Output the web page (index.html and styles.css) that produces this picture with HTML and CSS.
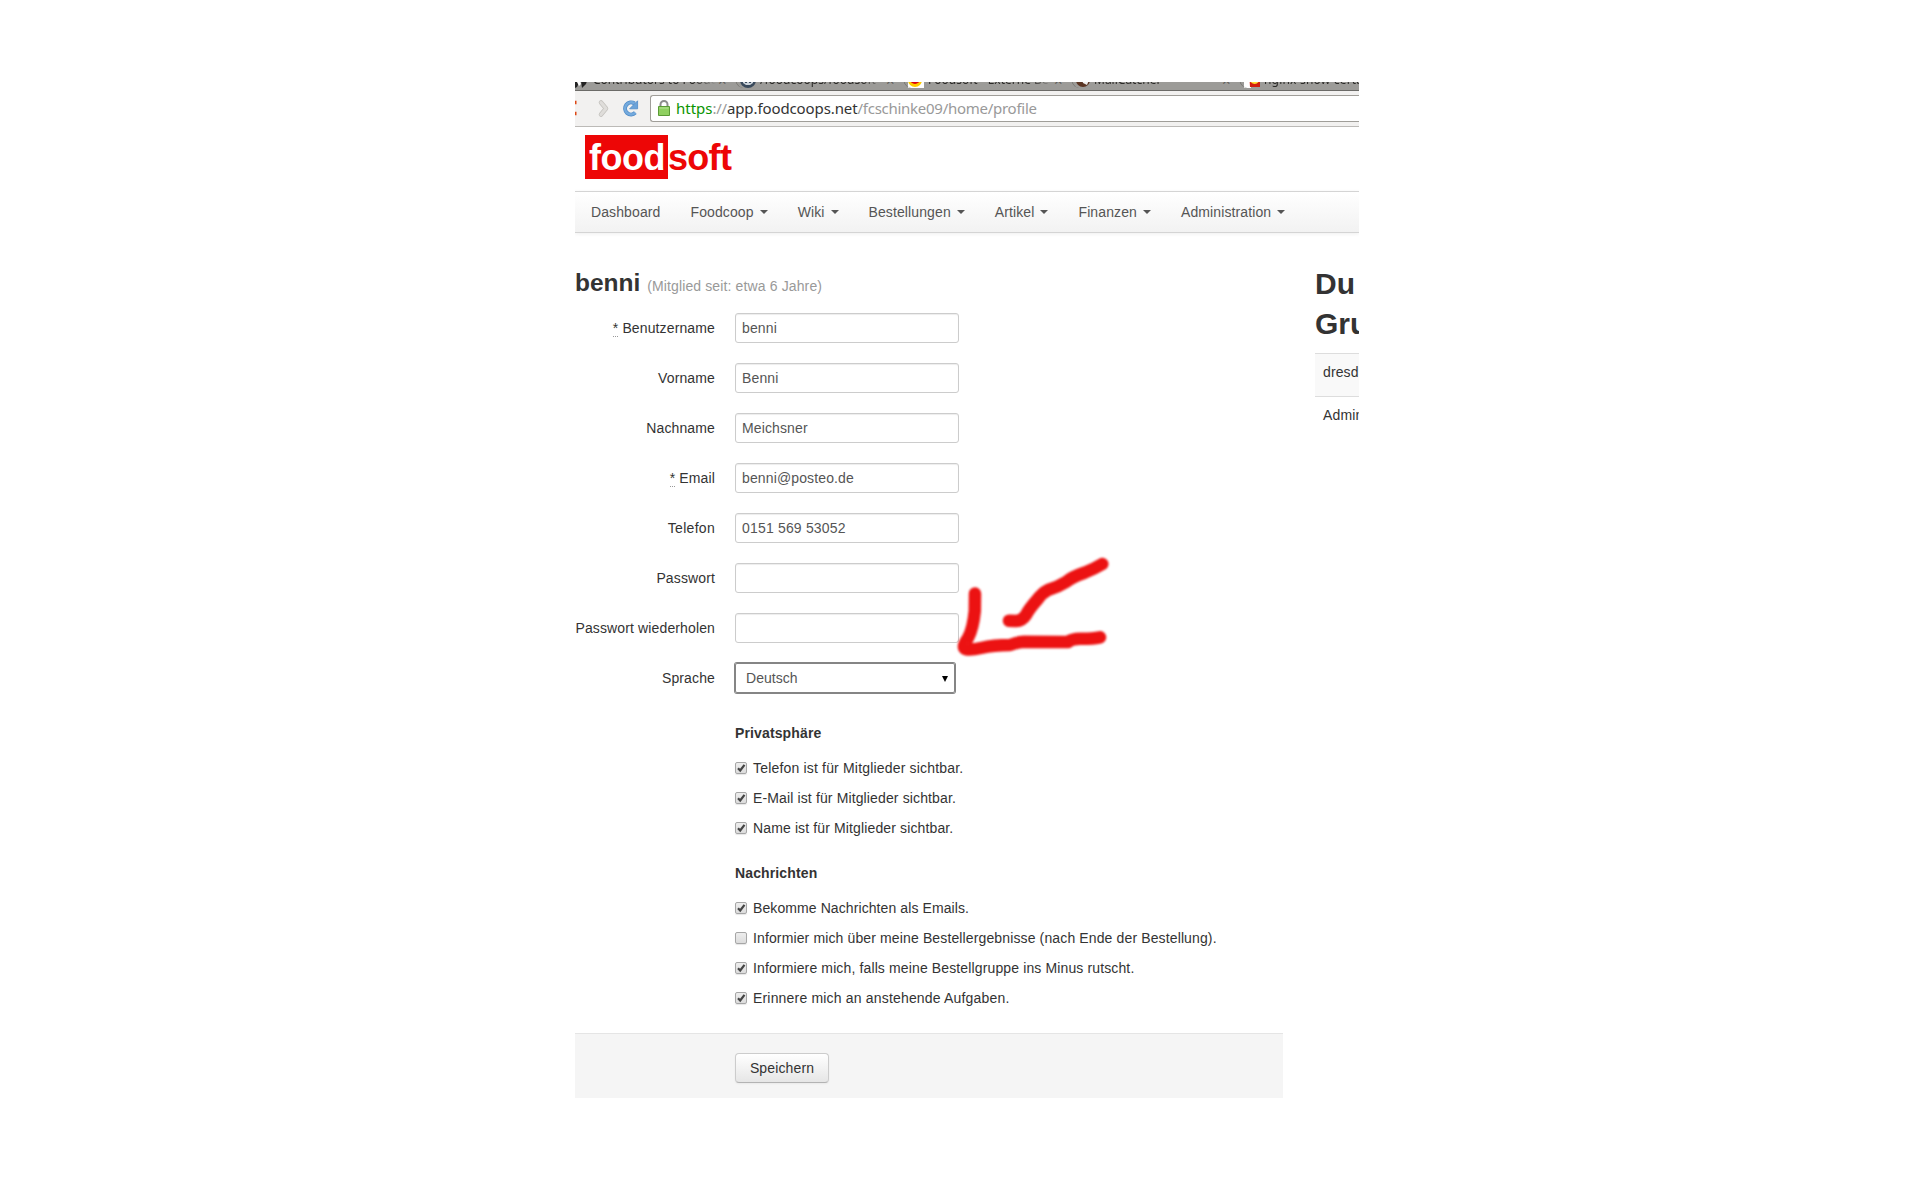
FILE: index.html
```html
<!DOCTYPE html>
<html lang="de">
<head>
<meta charset="utf-8">
<title>Foodsoft</title>
<link rel="stylesheet" href="styles.css">
</head>
<body>
<div class="window">
  <div class="tabs">
    <div class="tab tab-a"><svg class="fav" viewBox="0 0 16 16"><path d="M0 9l3 0 1 2-2 4-2 1z" fill="#222"/><path d="M6 9h6l-1 3-4 4z" fill="#222"/><path d="M2 10l3-1 1 3-2 2z" fill="#fff"/></svg><span class="title">Contributors to Foodc</span><span class="close">×</span></div>
    <div class="tab tab-b"><svg class="fav" viewBox="0 0 16 16"><circle cx="8" cy="8" r="8" fill="#3a4a5c"/><path d="M3 5l3 1h4l3-1v6l-3 2H6l-3-2z" fill="#ccd3da"/><path d="M5 9h2v2H5zM9 9h2v2H9z" fill="#3a4a5c"/></svg><span class="title">/foodcoops/foodsoft</span><span class="close">×</span></div>
    <div class="tab tab-c"><svg class="fav" viewBox="0 0 16 16"><path d="M0 0h16v16H0z" fill="#fff"/><circle cx="7" cy="8" r="7" fill="#fc0"/><circle cx="7" cy="7" r="5" fill="#d01"/></svg><span class="title">Foodsoft - Externe Be</span><span class="close">×</span></div>
    <div class="tab tab-d"><svg class="fav" viewBox="0 0 16 16"><circle cx="7" cy="8" r="7" fill="#5b3523"/><path d="M6 7l7 1-2 5-4-2z" fill="#eee"/></svg><span class="title">MailCatcher</span><span class="close">×</span></div>
    <div class="tab tab-e"><svg class="fav" viewBox="0 0 16 16"><path d="M0 0h7v16H0z" fill="#fff"/><path d="M5 0h11v15H6z" fill="#d21d0c"/><path d="M7 9q4 4 7 0" stroke="#fd3" stroke-width="2" fill="none"/></svg><span class="title">nginx show certai</span></div>
  </div>
  <div class="toolbar">
    <svg class="buttons" width="75" height="35" viewBox="0 0 75 35">
      <path d="M0 11.500h1.500M0 22.500h1.500" stroke="#dd4814" stroke-width="3.500"/>
      <path d="M26 11.500l5 6-5 6" fill="none" stroke="#c4c2be" stroke-width="4.500" stroke-linecap="round" stroke-linejoin="round"/>
      <path d="M26 11.500l5 6-5 6" fill="none" stroke="#dfddda" stroke-width="3" stroke-linecap="round" stroke-linejoin="round"/>
      <path d="M59.500 12.500a6 6 0 1 0 .8 9.200" fill="none" stroke="#4f8ac6" stroke-width="4"/>
      <path d="M59.500 12.500a6 6 0 1 0 .8 9.200" fill="none" stroke="#74aadd" stroke-width="2.600"/>
      <path d="M62.600 9.800v8h-8z" fill="#6ba3d9" stroke="#4f8ac6" stroke-width=".8"/>
    </svg>
    <div class="address">
      <svg class="lock" width="12" height="16" viewBox="0 0 12 16">
        <path d="M2.500 7V4.500a3.500 3.500 0 0 1 7 0V7" fill="none" stroke="#8d8d8d" stroke-width="2"/>
        <path d="M.5 6.500h11v9H.5z" fill="#8fd060" stroke="#5a9a35"/>
        <path d="M1.500 8h9" stroke="#b5e494"/>
      </svg>
      <span class="url"><span class="scheme">https</span>://<span class="host">app.foodcoops.net</span>/fcschinke09/home/profile</span>
    </div>
  </div>
  <header class="header"><div class="logo"><span class="logo-box">food</span><span class="logo-rest">soft</span></div></header>
  <nav class="nav">
    <a>Dashboard</a>
    <a>Foodcoop <b class="caret"></b></a>
    <a>Wiki <b class="caret"></b></a>
    <a>Bestellungen <b class="caret"></b></a>
    <a>Artikel <b class="caret"></b></a>
    <a>Finanzen <b class="caret"></b></a>
    <a>Administration <b class="caret"></b></a>
  </nav>
  <div class="content">
    <main class="profile">
      <h3>benni <small>(Mitglied seit: etwa 6 Jahre)</small></h3>
      <form>
        <div class="row"><label><abbr>*</abbr> Benutzername</label><div class="field">benni</div></div>
        <div class="row"><label>Vorname</label><div class="field">Benni</div></div>
        <div class="row"><label>Nachname</label><div class="field">Meichsner</div></div>
        <div class="row"><label><abbr>*</abbr> Email</label><div class="field">benni@posteo.de</div></div>
        <div class="row"><label class="wide">Telefon</label><div class="field loose">0151 569 53052</div></div>
        <div class="row"><label>Passwort</label><div class="field"></div></div>
        <div class="row"><label>Passwort wiederholen</label><div class="field"></div></div>
        <div class="row"><label>Sprache</label><div class="field select"><span>Deutsch</span><i class="arrow"></i></div></div>
        <section class="settings">
          <h5>Privatsphäre</h5>
          <div class="check loose"><i class="box"><svg viewBox="0 0 12 12"><path d="M3 6.200l2.200 2.300L9.500 2.800"/></svg></i>Telefon ist für Mitglieder sichtbar.</div>
          <div class="check"><i class="box"><svg viewBox="0 0 12 12"><path d="M3 6.200l2.200 2.300L9.500 2.800"/></svg></i>E-Mail ist für Mitglieder sichtbar.</div>
          <div class="check"><i class="box"><svg viewBox="0 0 12 12"><path d="M3 6.200l2.200 2.300L9.500 2.800"/></svg></i>Name ist für Mitglieder sichtbar.</div>
        </section>
        <section class="settings">
          <h5>Nachrichten</h5>
          <div class="check tight"><i class="box"><svg viewBox="0 0 12 12"><path d="M3 6.200l2.200 2.300L9.500 2.800"/></svg></i>Bekomme Nachrichten als Emails.</div>
          <div class="check"><i class="box"></i>Informier mich über meine Bestellergebnisse (nach Ende der Bestellung).</div>
          <div class="check"><i class="box"><svg viewBox="0 0 12 12"><path d="M3 6.200l2.200 2.300L9.500 2.800"/></svg></i>Informiere mich, falls meine Bestellgruppe ins Minus rutscht.</div>
          <div class="check loose"><i class="box"><svg viewBox="0 0 12 12"><path d="M3 6.200l2.200 2.300L9.500 2.800"/></svg></i>Erinnere mich an anstehende Aufgaben.</div>
        </section>
        <div class="actions"><button type="button">Speichern</button></div>
      </form>
    </main>
    <aside class="groups">
      <h2>Du<br>Gru</h2>
      <div class="group odd">dresd</div>
      <div class="group">Admin</div>
    </aside>
  </div>
  <svg class="marker" width="160" height="110" viewBox="950 550 160 110">
    <path d="M975 593.500L974.800 611Q973 629 968 638Q961 648 966 649.200Q972 650 981 648Q994 645 1010 645Q1018 642 1024 641.800L1068 642Q1072 638.800 1080 638.800Q1092 639 1100 637.300"/>
    <path d="M1102.300 564Q1094 569 1085 572.500Q1072 577 1066 582Q1058 587 1048 590Q1042 593 1037 600Q1029 609 1026 615Q1022 621 1016 621L1009 620.700"/>
  </svg>
</div>
</body>
</html>
```
FILE: styles.css
```css
* { box-sizing: border-box; }
body {
  margin: 0;
  background: #fff;
  color: #333;
  font: 14px/20px "Liberation Sans", Arial, sans-serif;
  letter-spacing: .13px;
}
.window {
  position: relative;
  width: 784px;
  height: 1016px;
  margin: 82px 0 0 575px;
  overflow: hidden;
}

/* browser chrome */
.tabs {
  display: flex;
  height: 9px;
  overflow: hidden;
  background: #9c9b98;
  border-bottom: 1px solid #6c6b68;
  color: #2b2a28;
  font: 12px/16px "Noto Sans", sans-serif;
  letter-spacing: 0;
}
.tab {
  position: relative;
  display: flex;
  align-items: center;
  flex: none;
  width: 168px;
  height: 16px;
  margin-top: -10px;
  white-space: nowrap;
}
.tab + .tab::before {
  content: "";
  position: absolute;
  left: -4px;
  bottom: 0;
  width: 8px;
  height: 9px;
  border-left: 1px solid #75746f;
  border-bottom-left-radius: 6px;
  transform: skewX(18deg);
}
.tab .fav { width: 16px; height: 16px; margin-right: 4px; flex: none; }
.tab .title {
  flex: 1;
  overflow: hidden;
  -webkit-mask-image: linear-gradient(90deg, #000 82%, transparent);
  mask-image: linear-gradient(90deg, #000 82%, transparent);
}
.tab .close { width: 24px; padding-left: 2px; color: #5b5a57; font-size: 15px; }
.tab-a { width: 165px; }
.tab-a .fav { margin-right: 2px; }
.tab-d .fav { margin-right: 2px; }
.tab-e .title { letter-spacing: .2px; }

.toolbar {
  display: flex;
  height: 36px;
  background: #f2f1f0;
  border-bottom: 1px solid #bcbab7;
}
.buttons { flex: none; }
.address {
  display: flex;
  flex: 1;
  align-items: center;
  height: 27px;
  margin-top: 4px;
  padding: 0 0 1px 7px;
  background: #fff;
  border: 1px solid #a09e99;
  border-right: 0;
  border-radius: 3px 0 0 3px;
}
.lock { margin-right: 6px; }
.url {
  color: #999;
  font: 15px/20px "Noto Sans", sans-serif;
  letter-spacing: -.27px;
  white-space: nowrap;
}
.scheme { color: #0a9400; letter-spacing: 0; }
.host { color: #333; letter-spacing: -.1px; }

/* page header */
.header { height: 64px; padding: 8px 0 0 10px; }
.logo {
  display: flex;
  color: #ed0606;
  font-size: 36px;
  font-weight: bold;
  letter-spacing: -.5px;
  line-height: 44px;
}
.logo-box { width: 83px; height: 44px; padding: 1px 0 0 4px; background: #ed0606; color: #fff; }
.logo-rest { padding-top: 1px; letter-spacing: -.7px; }
.nav {
  display: flex;
  height: 42px;
  padding-left: 1px;
  border: solid #d4d4d4;
  border-width: 1px 0;
  background: linear-gradient(#fff, #f2f2f2);
  box-shadow: 0 1px 4px rgba(0, 0, 0, .065);
  letter-spacing: .11px;
}
.nav a { padding: 10px 15px; color: #555; }
.caret {
  display: inline-block;
  margin: 8px 0 0 2px;
  vertical-align: top;
  border: 4px solid transparent;
  border-top-color: #555;
  border-bottom: 0;
}

/* profile */
.content { display: flex; gap: 32px; padding-top: 30px; }
.profile { flex: none; width: 708px; }
h3 { margin: 0; padding-bottom: 7px; font-size: 24.5px; line-height: 40px; letter-spacing: 0; }
h3 small { color: #999; font-size: 14px; font-weight: normal; letter-spacing: .13px; }
.row { display: flex; gap: 20px; height: 30px; margin-bottom: 20px; }
.row label { width: 140px; padding-top: 5px; text-align: right; white-space: nowrap; }
.row .wide { letter-spacing: .3px; }
abbr { border-bottom: 1px dotted #999; }
.field {
  width: 224px;
  height: 30px;
  padding: 4px 6px;
  border: 1px solid #ccc;
  border-radius: 3px;
  color: #555;
  box-shadow: inset 0 1px 1px rgba(0, 0, 0, .075);
}
.loose { letter-spacing: .18px; }
.tight { letter-spacing: .09px; }
.select {
  display: flex;
  justify-content: space-between;
  width: 220px;
  padding: 4px 6px 4px 10px;
  border-color: #858585;
  border-radius: 2px;
  box-shadow: 0 0 0 1px #858585;
  letter-spacing: .05px;
}
.arrow {
  margin-top: 8px;
  height: 6px;
  border: 3.5px solid transparent;
  border-top: 6px solid #000;
  border-bottom: 0;
}
.settings { padding: 0 0 5px 160px; }
h5 { margin: 0; padding: 10px 0; height: 40px; font-size: 14px; line-height: 20px; }
.check { display: flex; height: 20px; margin: 5px 0 10px; white-space: nowrap; }
.box {
  width: 12px;
  height: 12px;
  margin: 4px 6px 0 0;
  border: 1px solid #a6a6a6;
  border-radius: 2px;
  background: linear-gradient(#ededed, #dcdcdc);
  box-shadow: 0 1px 1px rgba(0, 0, 0, .1);
}
.box svg { display: block; width: 12px; height: 12px; margin: -1px; }
.box path { fill: none; stroke: #444; stroke-width: 2.2; }
.actions {
  height: 65px;
  margin-top: 10px;
  padding: 19px 0 0 160px;
  border-top: 1px solid #e5e5e5;
  background: #f5f5f5;
}
button {
  width: 94px;
  height: 30px;
  padding: 0;
  border: 1px solid #ccc;
  border-bottom-color: #b3b3b3;
  border-radius: 4px;
  background: linear-gradient(#fff, #e6e6e6);
  box-shadow: inset 0 1px 0 rgba(255, 255, 255, .2), 0 1px 2px rgba(0, 0, 0, .05);
  color: #333;
  font: inherit;
  letter-spacing: inherit;
}
.groups { flex: 1; white-space: nowrap; }
h2 { margin: 0 0 9px; padding-top: 1px; font-size: 30px; line-height: 40px; letter-spacing: 0; }
.group { height: 43px; padding: 8px; border-top: 1px solid #ddd; }
.odd { background: #f9f9f9; }

/* hand-drawn arrow over the form */
.marker { position: absolute; left: 375px; top: 468px; filter: blur(1px); }
.marker path {
  fill: none;
  stroke: #ec1212;
  stroke-width: 12.5;
  stroke-linecap: round;
  stroke-linejoin: round;
}
```
